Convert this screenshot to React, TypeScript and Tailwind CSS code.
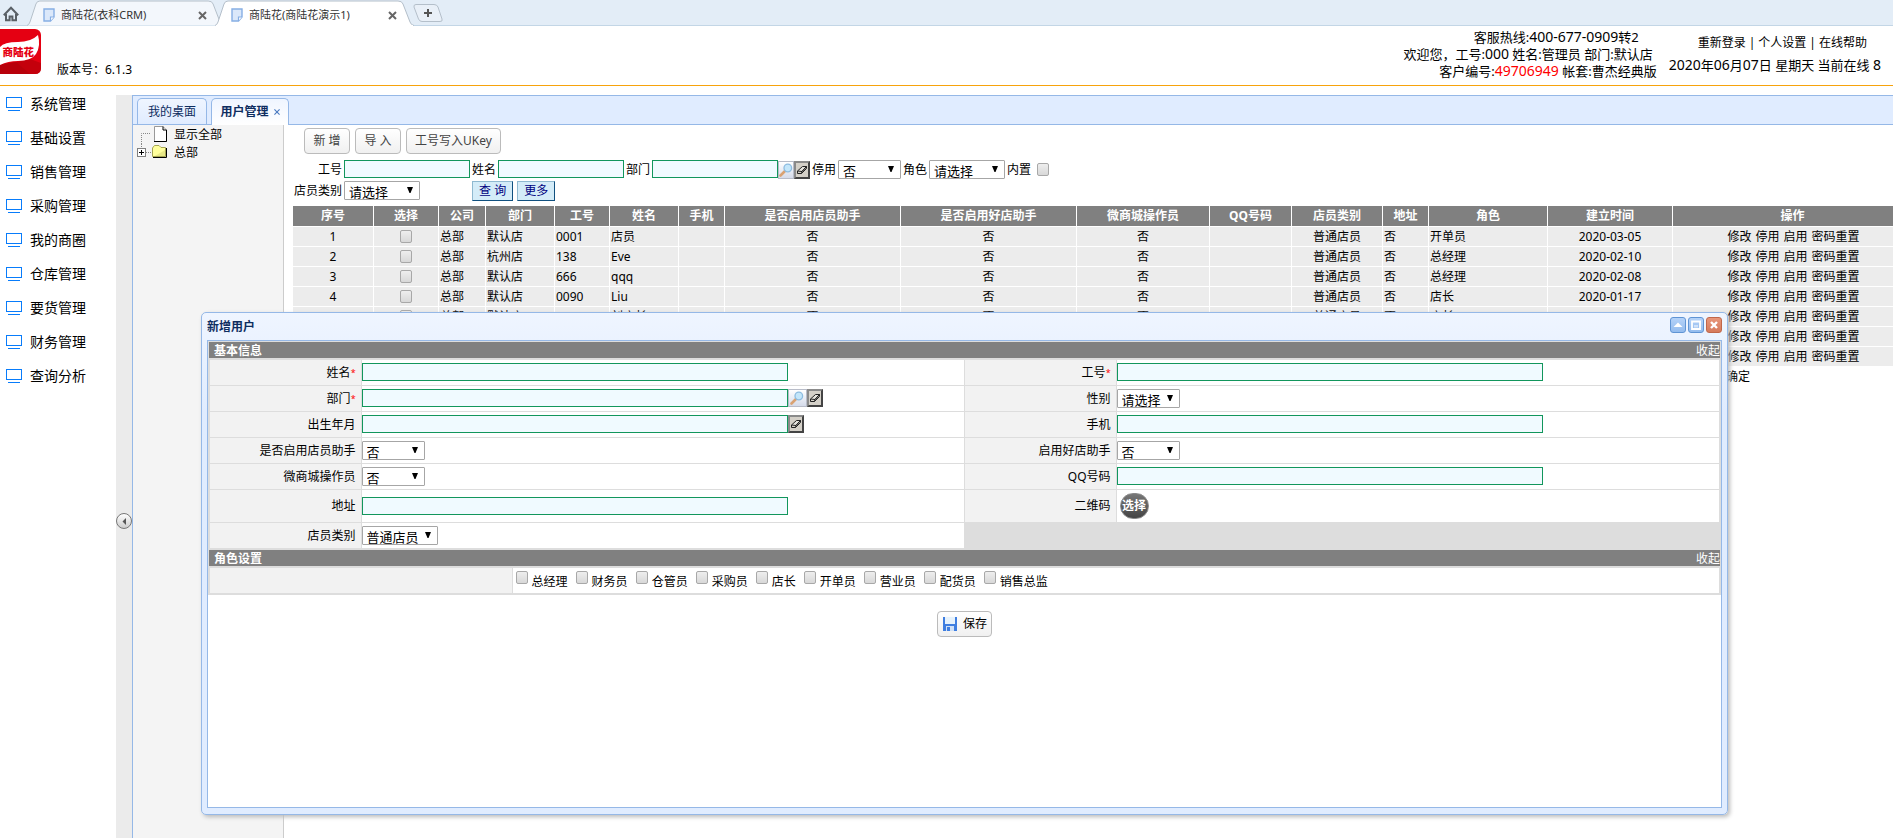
import React, { useState } from "react";

const MENU = ["系统管理", "基础设置", "销售管理", "采购管理", "我的商圈", "仓库管理", "要货管理", "财务管理", "查询分析"];

type Column = { title: string; width: number; align?: "left" };
const COLUMNS: Column[] = [
  { title: "序号", width: 81 },
  { title: "选择", width: 65 },
  { title: "公司", width: 47, align: "left" },
  { title: "部门", width: 69, align: "left" },
  { title: "工号", width: 55, align: "left" },
  { title: "姓名", width: 69, align: "left" },
  { title: "手机", width: 46 },
  { title: "是否启用店员助手", width: 176 },
  { title: "是否启用好店助手", width: 176 },
  { title: "微商城操作员", width: 133 },
  { title: "QQ号码", width: 82 },
  { title: "店员类别", width: 91 },
  { title: "地址", width: 46, align: "left" },
  { title: "角色", width: 119, align: "left" },
  { title: "建立时间", width: 125 },
  { title: "操作", width: 240 },
];

const USERS = [
  { dept: "默认店", no: "0001", name: "店员", role: "开单员", date: "2020-03-05" },
  { dept: "杭州店", no: "138", name: "Eve", role: "总经理", date: "2020-02-10" },
  { dept: "默认店", no: "666", name: "qqq", role: "总经理", date: "2020-02-08" },
  { dept: "默认店", no: "0090", name: "Liu", role: "店长", date: "2020-01-17" },
  { dept: "默认店", no: "003", name: "刘店长", role: "店长", date: "2020-01-10" },
  { dept: "默认店", no: "002", name: "小王", role: "店长", date: "2020-01-08" },
  { dept: "默认店", no: "000", name: "管理员", role: "总经理", date: "2020-01-01" },
];

const ROLES = ["总经理", "财务员", "仓管员", "采购员", "店长", "开单员", "营业员", "配货员", "销售总监"];

function Num({ children }: { children: React.ReactNode }) {
  return <span className="text-sm leading-none">{children}</span>;
}

function HomeIcon() {
  return (
    <svg className="h-4 w-4" viewBox="0 0 16 16" fill="none" stroke="#5a6066" strokeWidth="2">
      <path d="M0.8 9.2 L8 1.8 L15.2 9.2" />
      <path d="M3 8 V14.2 H6.6 V10.4 H9.4 V14.2 H13 V8" />
    </svg>
  );
}

function DocIcon() {
  return (
    <svg className="h-[14px] w-[12px] shrink-0" viewBox="0 0 12 14">
      <path d="M1 1 H11 V9 L7.5 13 H1 Z" fill="#dbe8fa" stroke="#86aee4" strokeWidth="1.4" />
      <path d="M11 9 H7.5 V13" fill="#fff" stroke="#86aee4" strokeWidth="1.2" />
    </svg>
  );
}

function CrossIcon() {
  return (
    <svg className="h-[9px] w-[9px]" viewBox="0 0 9 9" stroke="#666" strokeWidth="2">
      <path d="M1 1 L8 8 M8 1 L1 8" />
    </svg>
  );
}

function BrowserTab({ title, active }: { title: string; active?: boolean }) {
  return (
    <div className={active ? "relative -ml-[10px] h-[26px] w-[200px]" : "relative h-[26px] w-[198px]"}>
      <svg className="absolute inset-0 h-full w-full" viewBox="0 0 200 26" preserveAspectRatio="none">
        <path
          d="M0 25.5 Q2 25 3 22 L9 4 Q10 1 13 1 H183 Q187 1 188 4 L195 22 Q196 25 199 25.5"
          fill={active ? "#ffffff" : "#f3f7fc"}
          stroke="#b4bfca"
        />
        {active && <path d="M1 25.5 H198" stroke="#fff" />}
      </svg>
      <div className="relative flex h-full items-center pt-1 pr-[18px] pl-4">
        <DocIcon />
        <span className="ml-[6px] flex-1 text-[11px] whitespace-nowrap text-[#333]">{title}</span>
        <button type="button" aria-label="关闭标签">
          <CrossIcon />
        </button>
      </div>
    </div>
  );
}

function BrowserBar() {
  return (
    <div className="flex h-[26px] shrink-0 border-b border-[#c3d6e6] bg-[#e3edf7]">
      <button type="button" aria-label="主页" className="mr-2 flex w-[19px] items-center justify-end pt-0.5">
        <HomeIcon />
      </button>
      <BrowserTab title="商陆花(衣科CRM)" />
      <BrowserTab title="商陆花(商陆花演示1)" active />
      <button type="button" aria-label="新标签" className="-ml-0.5 h-[26px]">
        <svg className="h-[26px] w-[30px]" viewBox="0 0 30 26">
          <path d="M3 4.5 H21 Q24 4.5 25 7 L29 19 Q30 21.5 27 21.5 H9 Q6.500 21.5 5.500 19 L1 7 Q0.500 4.500 3 4.500 Z" fill="#e9f0f8" stroke="#b4bfca" />
          <path d="M15 9 V17 M11 13 H19" stroke="#555" strokeWidth="2" />
        </svg>
      </button>
    </div>
  );
}

function Logo() {
  return (
    <svg className="h-[45px] w-[41px]" viewBox="0 0 41 45">
      <rect x="-8" y="0" width="49" height="45" rx="6" fill="#e50012" />
      <path d="M0 35 Q18 33 30 30 L41 34 V39 Q41 45 35 45 H0 Z" fill="#c4000c" />
      <path d="M0 36 L16 33 L30 45 H0 Z" fill="#b0000a" opacity="0.6" />
      <path d="M0 18 Q4 13 18 13 Q31 13 38 6 Q41 17 36 25 Q31 32 18 32 Q8 32 0 36 Z" fill="#fff" />
      <text x="2.500" y="27" fontSize="10.500" fontWeight="900" fill="#e50012" className="font-['Noto_Sans_CJK_SC',sans-serif]">
        商陆花
      </text>
    </svg>
  );
}

function Header() {
  return (
    <header className="flex h-[60px] shrink-0 border-b border-[#f7a30c] bg-white">
      <div className="flex items-start gap-4 pt-[3px]">
        <Logo />
        <span className="mt-8 text-xs leading-[18px]">版本号：6.1.3</span>
      </div>
      <div className="ml-auto flex text-[13px] whitespace-nowrap">
        <div className="pt-[3px] text-right leading-[17px]">
          <p className="pr-[18px]">
            客服热线:<Num>400-677-0909</Num>转2
          </p>
          <p className="pr-1">
            欢迎您，工号:<Num>000</Num> 姓名:管理员 部门:默认店
          </p>
          <p>
            客户编号:<span className="text-[#f00]"><Num>49706949</Num></span> 帐套:曹杰经典版
          </p>
        </div>
        <div className="flex flex-col items-end gap-1 pt-2 pr-3 pl-3 leading-[18px]">
          <nav className="flex gap-[3px] pr-[14px] text-xs leading-[18px]">
            <a href="#relogin">重新登录</a>|<a href="#profile">个人设置</a>|<a href="#help">在线帮助</a>
          </nav>
          <p>
            <Num>2020</Num>年<Num>06</Num>月<Num>07</Num>日 星期天 当前在线 <Num>8</Num>
          </p>
        </div>
      </div>
    </header>
  );
}

function Sidebar() {
  return (
    <nav className="w-[116px] shrink-0 pt-px">
      {MENU.map((m) => (
        <a key={m} href="#menu" className="flex h-[34px] items-center gap-2 pl-[6px] text-sm">
          <svg className="h-[14px] w-4" viewBox="0 0 16 14" fill="none" stroke="#087cfb">
            <rect x="0.5" y="0.5" width="15" height="10" />
            <path d="M2 13.500 H14" />
          </svg>
          {m}
        </a>
      ))}
    </nav>
  );
}

function Splitter() {
  return (
    <div className="mt-[9px] flex w-4 shrink-0 items-center bg-[#ebebeb] pt-[109px]">
      <button
        type="button"
        aria-label="收起菜单"
        className="flex h-4 w-4 items-center justify-center rounded-full border border-[#777] bg-gradient-to-b from-white to-[#ccc]"
      >
        <svg className="h-[7px] w-[5px]" viewBox="0 0 5 7">
          <path d="M4 0 V7 L0.500 3.500 Z" fill="#555" />
        </svg>
      </button>
    </div>
  );
}

function PageTabs() {
  return (
    <div className="flex h-[30px] shrink-0 items-end gap-1 border-y border-[#95b8e7] bg-[#e0ecff] pl-1 text-xs text-[#0e2d5f]">
      <button
        type="button"
        className="h-[26px] w-[70px] rounded-t-[5px] border border-b-0 border-[#95b8e7] bg-gradient-to-b from-[#eff5ff] to-[#e0ecff]"
      >
        我的桌面
      </button>
      <div className="-mb-px flex h-[27px] w-[78px] items-center justify-center gap-[5px] rounded-t-[5px] border border-b-0 border-[#95b8e7] bg-gradient-to-b from-[#eff5ff] to-white font-bold">
        用户管理
        <button type="button" aria-label="关闭">
          <svg className="h-[6px] w-[6px]" viewBox="0 0 7 7" stroke="#4a7ac0" strokeWidth="1.300">
            <path d="M0.500 0.500 L6.500 6.500 M6.500 0.500 L0.500 6.500" />
          </svg>
        </button>
      </div>
    </div>
  );
}

function Tree() {
  return (
    <aside className="w-[151px] shrink-0 border-r border-[#ccc] bg-[#f4f4f4] pt-px pl-1 text-xs leading-[18px]">
      <ul>
        <li className="flex h-[18px] items-center gap-[7px]">
          <svg className="h-[18px] w-[30px]" viewBox="0 0 30 18">
            <path d="M4.500 18 V7.500 H14" fill="none" stroke="#888" strokeDasharray="1 1" />
            <path d="M17.500 0.500 H26 L29.500 4 V15.500 H17.500 Z" fill="#fff" stroke="#999" />
            <path d="M26 0.500 V4 H29.500 V15.500 H17" fill="none" stroke="#000" />
          </svg>
          <a href="#all">显示全部</a>
        </li>
        <li className="flex h-[18px] items-center gap-[7px]">
          <svg className="h-[18px] w-[30px]" viewBox="0 0 30 18">
            <path d="M4.500 0 V4 M9 8.500 H14" fill="none" stroke="#888" strokeDasharray="1 1" />
            <rect x="0.500" y="4.500" width="8" height="8" fill="#fff" stroke="#808080" />
            <path d="M2 8.500 H7 M4.500 6 V11" stroke="#000" />
            <path d="M15.500 12.500 V4 L17.500 1.500 H22 L24 3.500 H28.500 V12.500 Z" fill="#ffff9c" stroke="#a5a552" />
            <path d="M29.500 4 V13.500 H16" fill="none" stroke="#000" />
            <path d="M28 6 V12 H18 Z" fill="#d8d878" opacity="0.600" />
          </svg>
          <a href="#hq">总部</a>
        </li>
      </ul>
    </aside>
  );
}

function Check({ label }: { label: string }) {
  return (
    <input
      type="checkbox"
      aria-label={label}
      className="block h-[13px] w-3 shrink-0 appearance-none rounded-[2px] border border-[#a8a8a8] bg-gradient-to-b from-[#eee] to-[#d8d8d8] checked:bg-[#4a7ac0]"
    />
  );
}

function Select({ id, options, wide }: { id: string; options: string[]; wide?: boolean }) {
  return (
    <span className={wide ? "relative block h-[19px] w-[76px] shrink-0" : "relative block h-[19px] w-[63px] shrink-0"}>
      <select
        id={id}
        className="block h-full w-full appearance-none rounded-[1px] border border-[#a6a6a6] bg-white pt-[3px] pl-1 text-[13px] leading-[15px] text-black"
      >
        {options.map((o) => (
          <option key={o}>{o}</option>
        ))}
      </select>
      <svg className="pointer-events-none absolute top-[6px] right-[7px] h-[6px] w-[6px]" viewBox="0 0 6 6">
        <path d="M0 0 H6 L3.500 6 H2.500 Z" fill="#000" />
      </svg>
    </span>
  );
}

function SearchButton({ wide }: { wide?: boolean }) {
  return (
    <button
      type="button"
      aria-label="查找"
      className={
        wide
          ? "flex h-[18px] w-[19px] shrink-0 items-center justify-center border border-[#b8bcc8] bg-gradient-to-b from-white to-[#d5dbea]"
          : "flex h-[18px] w-4 shrink-0 items-center justify-center border border-[#b8bcc8] bg-gradient-to-b from-white to-[#d5dbea]"
      }
    >
      <svg className="h-[14px] w-[14px]" viewBox="0 0 14 14">
        <path d="M1.500 12.500 L6 8" stroke="#d9a273" strokeWidth="2.600" strokeLinecap="round" />
        <circle cx="8.800" cy="5" r="3.800" fill="#c3e6fa" stroke="#8dbce0" strokeWidth="1.300" />
      </svg>
    </button>
  );
}

function ClearButton() {
  return (
    <button
      type="button"
      aria-label="清除"
      className="flex h-[18px] w-4 shrink-0 items-center justify-center border-2 border-t-[#8a8a8a] border-r-[#444] border-b-[#444] border-l-[#8a8a8a] bg-[#d4d0c8]"
    >
      <svg className="h-[10px] w-[12px]" viewBox="0 0 12 10" fill="none" stroke="#222">
        <path d="M1.500 6 L6.500 1.500 H10.500 L6 6.500 Z" fill="#e4e2dc" />
        <path d="M1.500 6 V8.500 H5.500 L10.500 3.500 V1.500 L6 6.500 L5.500 8.500" />
      </svg>
    </button>
  );
}

function TextBox({ id, long }: { id: string; long?: boolean }) {
  return (
    <input
      id={id}
      type="text"
      className={
        long
          ? "block h-[18px] w-[426px] min-w-0 border border-[#12965c] bg-[#f0faff] px-1 text-xs outline-none"
          : "block h-[18px] w-[126px] min-w-0 border border-[#12965c] bg-[#f0faff] px-1 text-xs outline-none"
      }
    />
  );
}

function ToolButton({ children }: { children: React.ReactNode }) {
  return (
    <button
      type="button"
      className="h-[26px] min-w-[46px] rounded-[4px] border border-[#bbb] bg-gradient-to-b from-white to-[#f0f0f0] px-2 text-xs text-[#444]"
    >
      {children}
    </button>
  );
}

function QueryButton({ children }: { children: React.ReactNode }) {
  return (
    <button
      type="button"
      className="h-5 border border-t-[#8fb9d0] border-r-[#10507f] border-b-[#10507f] border-l-[#8fb9d0] bg-[#d4ecf8] px-[6px] text-xs text-[#000080]"
    >
      {children}
    </button>
  );
}

function Filters() {
  return (
    <form className="flex flex-col gap-px pt-[6px] pl-[10px] text-xs whitespace-nowrap">
      <div className="flex h-5 items-start gap-0.5 leading-5">
        <label htmlFor="f-no" className="w-12 shrink-0 text-right">工号</label>
        <TextBox id="f-no" />
        <label htmlFor="f-name">姓名</label>
        <TextBox id="f-name" />
        <label htmlFor="f-dept">部门</label>
        <span className="flex items-start">
          <TextBox id="f-dept" />
          <span className="flex pt-px">
            <SearchButton />
            <ClearButton />
          </span>
        </span>
        <label htmlFor="f-stop">停用</label>
        <Select id="f-stop" options={["否", "是"]} />
        <label htmlFor="f-role">角色</label>
        <Select id="f-role" options={["请选择", ...ROLES]} wide />
        <span>内置</span>
        <span className="flex pt-[3px] pl-1">
          <Check label="内置" />
        </span>
      </div>
      <div className="flex h-5 items-start gap-0.5 leading-5">
        <label htmlFor="f-kind">店员类别</label>
        <Select id="f-kind" options={["请选择", "普通店员"]} wide />
        <div className="flex gap-1 pl-[50px]">
          <QueryButton>查 询</QueryButton>
          <QueryButton>更多</QueryButton>
        </div>
      </div>
    </form>
  );
}

function UserTable() {
  return (
    <table className="mt-[5px] ml-[9px] w-[1620px] table-fixed border-separate border-spacing-0 text-xs leading-[18px]">
      <colgroup>
        {COLUMNS.map((c) => (
          <col key={c.title} style={{ width: c.width }} />
        ))}
      </colgroup>
      <thead>
        <tr className="h-[21px]">
          {COLUMNS.map((c) => (
            <th key={c.title} className="border-r border-b border-white bg-[#808080] p-0 font-bold text-white">
              {c.title}
            </th>
          ))}
        </tr>
      </thead>
      <tbody>
        {USERS.map((u, i) => {
          const cells: React.ReactNode[] = [
            i + 1,
            <span className="flex justify-center" key="c"><Check label={"选择" + u.name} /></span>,
            "总部", u.dept, u.no, u.name, "", "否", "否", "否", "", "普通店员", "否", u.role, u.date,
            <span className="flex justify-center gap-1 pl-0.5" key="a">
              {["修改", "停用", "启用", "密码重置"].map((a) => (
                <a key={a} href="#action">{a}</a>
              ))}
            </span>,
          ];
          return (
            <tr key={u.no} className="h-5">
              {cells.map((c, k) => (
                <td
                  key={k}
                  className={
                    COLUMNS[k].align === "left"
                      ? "border-r border-b border-white bg-[#ececec] p-0 pl-px text-left"
                      : "border-r border-b border-white bg-[#ececec] p-0 text-center"
                  }
                >
                  {c}
                </td>
              ))}
            </tr>
          );
        })}
      </tbody>
    </table>
  );
}

function UserPage() {
  return (
    <main className="min-w-0 flex-1 overflow-hidden pt-[3px]">
      <div className="flex gap-[5px] pl-5">
        <ToolButton>新 增</ToolButton>
        <ToolButton>导 入</ToolButton>
        <ToolButton>工号写入UKey</ToolButton>
      </div>
      <Filters />
      <UserTable />
      <div className="flex justify-end pr-[143px] text-xs leading-5">
        <button type="button">确定</button>
      </div>
    </main>
  );
}

function SectionBar({ title, onToggle }: { title: string; onToggle: () => void }) {
  return (
    <div className="flex h-4 justify-between bg-[#808080] pl-[5px] text-xs leading-[18px] text-white">
      <h3 className="font-bold">{title}</h3>
      <button type="button" className="leading-[18px]" onClick={onToggle}>
        收起
      </button>
    </div>
  );
}

function Field({ label, id, required, children }: { label: string; id: string; required?: boolean; children: React.ReactNode }) {
  return (
    <>
      <label htmlFor={id} className="flex items-center justify-end bg-[#f2f2f2] pr-[5px]">
        {label}
        {required && <span className="text-[9px] text-[#f00]">*</span>}
      </label>
      <div className="flex min-h-[25px] items-center bg-white pb-px">{children}</div>
    </>
  );
}

function WindowButton({ label, close, children }: { label: string; close?: boolean; children: React.ReactNode }) {
  return (
    <button
      type="button"
      aria-label={label}
      className={
        close
          ? "h-4 w-4 rounded-[3px] border border-[#c0674a] bg-gradient-to-b from-[#e8967a] to-[#d57a5c]"
          : "h-4 w-4 rounded-[3px] border border-[#5f94d4] bg-gradient-to-b from-[#b4d2f8] to-[#94bcee]"
      }
    >
      <svg className="h-[14px] w-[14px]" viewBox="0 0 14 14" fill="none">
        {children}
      </svg>
    </button>
  );
}

function UserDialog() {
  const [basic, setBasic] = useState(true);
  const [roles, setRoles] = useState(true);
  return (
    <section
      role="dialog"
      aria-label="新增用户"
      className="absolute top-[312px] right-[165px] left-[201px] flex h-[503px] flex-col rounded-[5px] border border-[#95b8e7] bg-gradient-to-b from-[#eff5ff] to-[#e0ecff] to-20% px-[5px] pb-[6px] text-xs shadow-[2px_2px_4px_#bbb]"
    >
      <div className="flex h-[27px] shrink-0 items-center justify-between">
        <h2 className="font-bold text-[#0e2d5f]">新增用户</h2>
        <div className="flex gap-0.5 pb-1">
          <WindowButton label="折叠">
            <path d="M2.500 9 L7 4.500 L11.500 9 Z" fill="#fff" />
          </WindowButton>
          <WindowButton label="最大化">
            <path d="M3 3.500 H11 V11 H3 Z" stroke="#fff" strokeWidth="1.800" />
            <path d="M5 7 H9 V9.500 H5 Z" fill="#fff" opacity="0.500" />
          </WindowButton>
          <WindowButton label="关闭" close>
            <path d="M4 4 L10 10 M10 4 L4 10" stroke="#fff" strokeWidth="2.400" />
          </WindowButton>
        </div>
      </div>
      <div className="flex-1 border border-[#95b8e7] bg-white">
        <form>
          <div className="border border-b-0 border-[#ddd] bg-[#ddd]">
            <SectionBar title="基本信息" onToggle={() => setBasic(!basic)} />
            {basic && (
              <div className="grid grid-cols-[1fr_4fr_1fr_4fr] gap-px px-px py-0.5">
                <Field label="姓名" id="name" required>
                  <TextBox id="name" long />
                </Field>
                <Field label="工号" id="no" required>
                  <TextBox id="no" long />
                </Field>
                <Field label="部门" id="dept" required>
                  <TextBox id="dept" long />
                  <SearchButton wide />
                  <ClearButton />
                </Field>
                <Field label="性别" id="sex">
                  <Select id="sex" options={["请选择", "男", "女"]} />
                </Field>
                <Field label="出生年月" id="birth">
                  <TextBox id="birth" long />
                  <ClearButton />
                </Field>
                <Field label="手机" id="phone">
                  <TextBox id="phone" long />
                </Field>
                <Field label="是否启用店员助手" id="clerk">
                  <Select id="clerk" options={["否", "是"]} />
                </Field>
                <Field label="启用好店助手" id="shop">
                  <Select id="shop" options={["否", "是"]} />
                </Field>
                <Field label="微商城操作员" id="mall">
                  <Select id="mall" options={["否", "是"]} />
                </Field>
                <Field label="QQ号码" id="qq">
                  <TextBox id="qq" long />
                </Field>
                <Field label="地址" id="addr">
                  <TextBox id="addr" long />
                </Field>
                <Field label="二维码" id="qr">
                  <button
                    id="qr"
                    type="button"
                    className="mt-[3px] mb-0.5 ml-[3px] h-[26px] w-[29px] rounded-full border border-[#888] bg-gradient-to-b from-[#777] to-[#444] text-xs font-bold text-white"
                  >
                    <span className="-mx-1">选择</span>
                  </button>
                </Field>
                <Field label="店员类别" id="kind">
                  <Select id="kind" options={["普通店员"]} wide />
                </Field>
              </div>
            )}
            <SectionBar title="角色设置" onToggle={() => setRoles(!roles)} />
            {roles && (
              <div className="grid grid-cols-[1fr_4fr] gap-px px-px py-0.5">
                <div className="bg-[#f2f2f2]" />
                <div className="flex h-[25px] items-center gap-2 bg-white pl-[3px]">
                  {ROLES.map((r) => (
                    <label key={r} className="flex items-start gap-1">
                      <Check label={r} />
                      <span className="pt-[3px] leading-4">{r}</span>
                    </label>
                  ))}
                </div>
              </div>
            )}
          </div>
          <div className="flex justify-center pt-4">
            <button
              type="submit"
              className="flex h-[26px] items-center gap-[5px] rounded-[4px] border border-[#bbb] bg-gradient-to-b from-white to-[#f0f0f0] px-1 text-xs"
            >
              <svg className="h-4 w-4" viewBox="0 0 16 16">
                <path d="M1 1 H15 V15 H1 Z" fill="#3f7ee0" />
                <path d="M3 1 H13 V8 H3 Z" fill="#e6f2fc" />
                <path d="M4 10 H12 V15 H4 Z" fill="#cfe0f6" />
                <path d="M5 11 H8 V15 H5 Z" fill="#3f7ee0" />
              </svg>
              保存
            </button>
          </div>
        </form>
      </div>
    </section>
  );
}

export default function App() {
  return (
    <div className="relative flex h-screen flex-col overflow-hidden bg-white font-['Noto_Sans','Noto_Sans_CJK_SC',sans-serif] text-black">
      <BrowserBar />
      <Header />
      <div className="flex min-h-0 flex-1">
        <Sidebar />
        <Splitter />
        <div className="mt-[9px] flex min-w-0 flex-1 flex-col border-l border-[#95b8e7]">
          <PageTabs />
          <div className="flex min-h-0 flex-1">
            <Tree />
            <UserPage />
          </div>
        </div>
      </div>
      <UserDialog />
    </div>
  );
}
